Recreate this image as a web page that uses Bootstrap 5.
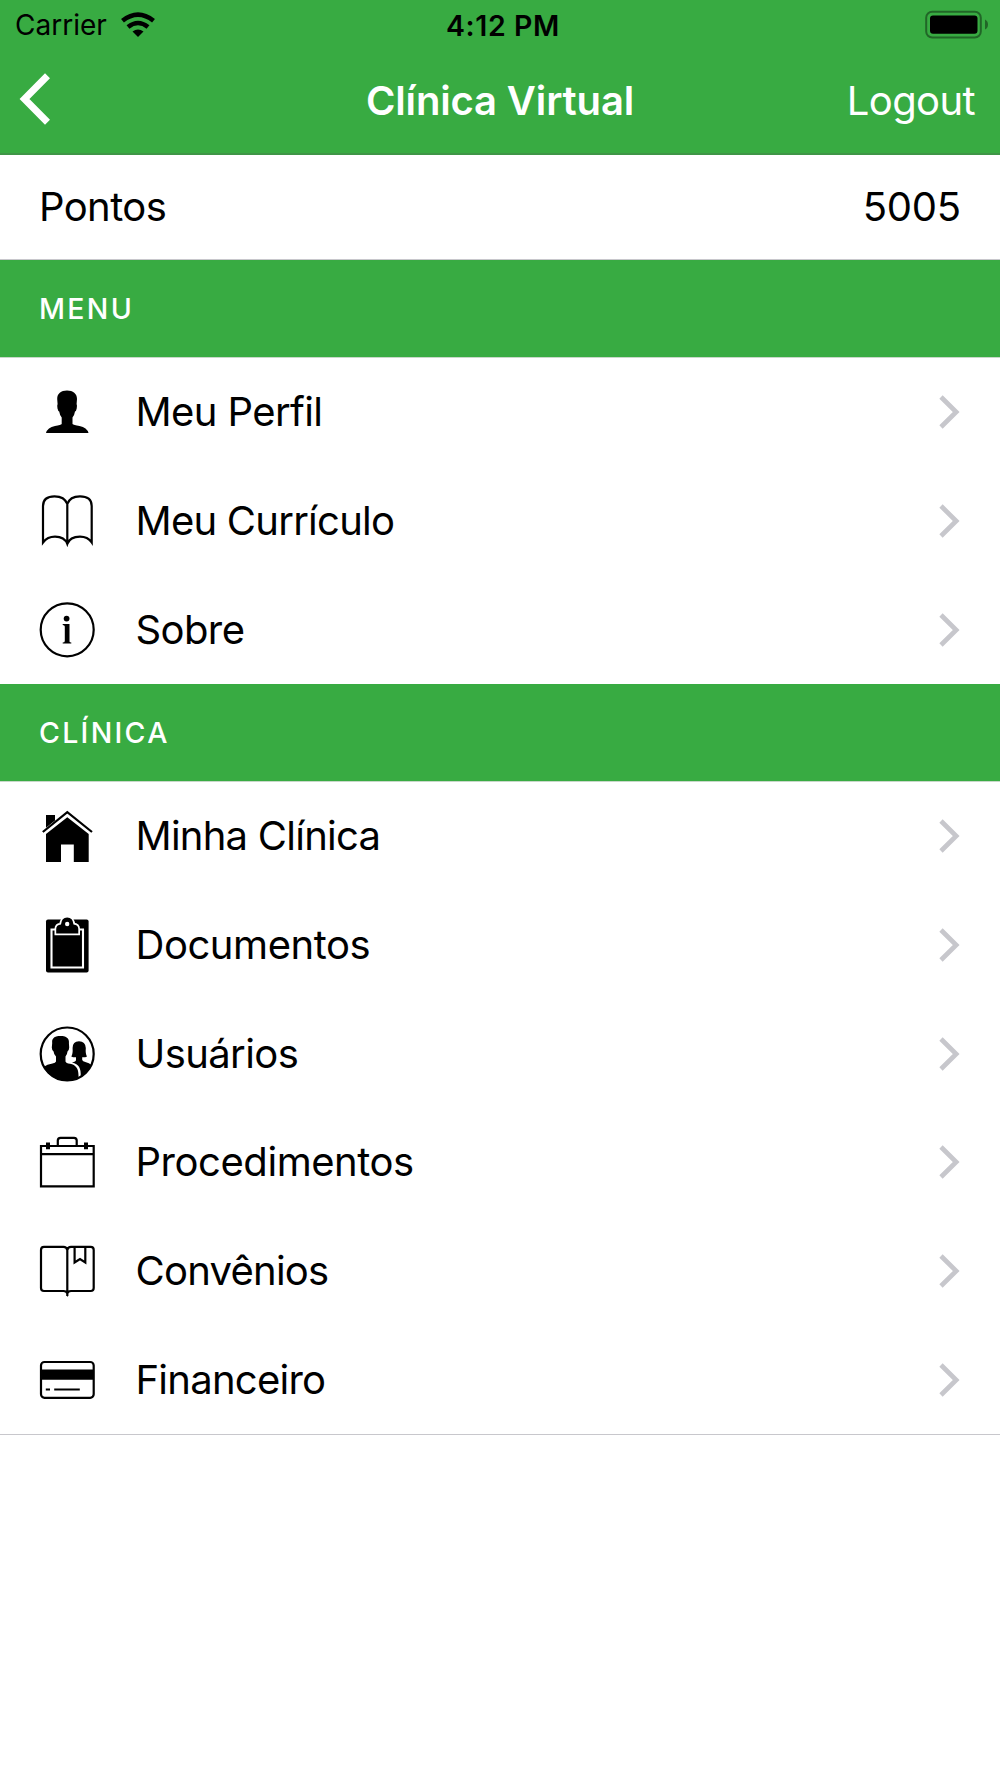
<!DOCTYPE html>
<html lang="pt-BR">
<head>
<meta charset="utf-8">
<meta name="viewport" content="width=device-width, initial-scale=1">
<title>Clínica Virtual</title>
<link href="https://cdn.jsdelivr.net/npm/bootstrap@5.3.0/dist/css/bootstrap.min.css" rel="stylesheet">
<style>
  :root { --brand: #38ab42; }
  body { font-family: Inter, "Liberation Sans", sans-serif; font-size: 40px; line-height: 1.2; color: #000; background: #fff; letter-spacing: -.6px; }
  svg { display: block; flex: none; }
  .app-head { background: var(--brand); height: 155px; border-bottom: 2px solid #3f9547; }
  .status-line { height: 50px; font-size: 28px; padding: 0 12px 0 15px; letter-spacing: 0; }
  .status-left { gap: 14px; }
  .carrier, .status-time { padding-top: 2px; }
  .status-time { font-weight: 600; font-size: 28.5px; letter-spacing: .6px; padding-left: 3px; }
  .battery { margin-bottom: 2px; }
  .title-line { height: 101px; padding: 0 25px 0 19px; }
  .back-arrow { margin-bottom: 4px; }
  .app-title { font-size: 40px; font-weight: 600; line-height: 1.2; letter-spacing: -.15px; padding-left: 6px; }
  .points-line { height: 105px; padding: 0 39px; border-bottom: 1px solid #c8c7cc; }
  .points { letter-spacing: -.2px; }
  .section-bar { background: var(--brand); height: 97px; padding: 1px 0 0 39px; font-size: 28.5px; letter-spacing: 2.3px; color: #fff; font-weight: 500; line-height: 1.2; }
  .menu-rows { border-top: 1px solid #c8d8c9; }
  .menu-rows .list-group-item { height: 108.7px; padding: 0 40px .4px 39px; gap: 40.5px; color: #000; background: #fff; }
  .menu-end { border-bottom: 1px solid #c8c7cc; }
  .snug { letter-spacing: -.75px; }
  .airy { letter-spacing: -.45px; }
  .ln { fill: none; stroke: #000; stroke-width: 2.2; }
</style>
</head>
<body>
<header class="app-head text-white">
  <div class="status-line row g-0 align-items-center text-black">
    <div class="col d-flex align-items-center status-left">
      <span class="carrier">Carrier</span>
      <svg class="wifi" width="34" height="26" viewBox="0 0 34 26"><g fill="none" stroke="#000" stroke-width="4.600"><path d="M1.500 8.800Q17-3.400 32.500 8.800"/><path d="M7 15Q17 7 27 15"/></g><path d="M11.500 19.400Q17 15.400 22.500 19.400L17 25z"/></svg>
    </div>
    <div class="col-auto status-time">4:12 PM</div>
    <div class="col d-flex justify-content-end">
      <svg class="battery" width="64" height="30" viewBox="0 0 64 30"><g opacity=".4"><rect x="2.200" y="2.700" width="54.600" height="25.800" rx="6" fill="none" stroke="#000" stroke-width="2"/><path d="M61 10.500q3 1.500 3 5t-3 5z"/></g><rect x="6" y="6.500" width="47.500" height="18.200" rx="3"/></svg>
    </div>
  </div>
  <div class="title-line row g-0 align-items-center">
    <div class="col"><svg class="back-arrow" width="32" height="54" viewBox="0 0 32 54"><path d="M28.500 3.800L5.500 27 28.500 50.200" fill="none" stroke="#fff" stroke-width="7"/></svg></div>
    <h1 class="col-auto app-title mb-0">Clínica Virtual</h1>
    <div class="col text-end"><span class="logout">Logout</span></div>
  </div>
</header>
<main>
  <div class="points-line d-flex align-items-center justify-content-between"><span>Pontos</span><span class="points">5005</span></div>

  <h2 class="section-bar d-flex align-items-center mb-0">MENU</h2>
  <div class="menu-rows list-group list-group-flush">
    <a href="#" class="list-group-item border-0 d-flex align-items-center">
      <svg width="56" height="56" viewBox="0 0 56 56"><path d="M28 6.500C22 6.500 18.200 9.500 18.200 15L18.600 20Q17.900 21 18.500 24.500 19 27 20.200 27.500 20.700 31 22.700 33.500V40Q22 41 16 42 8.500 43.500 7 49H49.500Q48 43.500 40.500 42 34.500 41 33.500 40V33.500Q35.500 31 36 27.500 37.300 27 37.700 24.500 38.300 21 37.600 20L38 15C38 9.500 34 6.500 28 6.500z"/></svg>
      <span class="flex-grow-1">Meu Perfil</span>
      <svg width="21" height="36" viewBox="0 0 21 36"><path d="M2 3L17.200 18 2 33" fill="none" stroke="#c7c7cc" stroke-width="4.700"/></svg>
    </a>
    <a href="#" class="list-group-item border-0 d-flex align-items-center">
      <svg width="56" height="56" viewBox="0 0 56 56"><path class="ln" d="M28.300 11C26.500 6 22 3.300 15.500 3.300 8 3.300 4 6.500 4 13V49.500C7 45.500 11 43.600 16 43.600 22 43.600 26.500 46 28.300 51 30 46 35 43.600 41 43.600 46 43.600 50 45.500 52.700 49.500V13C52.700 6.500 48.500 3.300 41 3.300 34.500 3.300 30 6 28.300 11V51"/></svg>
      <span class="flex-grow-1 snug">Meu Currículo</span>
      <svg width="21" height="36" viewBox="0 0 21 36"><path d="M2 3L17.200 18 2 33" fill="none" stroke="#c7c7cc" stroke-width="4.700"/></svg>
    </a>
    <a href="#" class="list-group-item border-0 d-flex align-items-center">
      <svg width="56" height="56" viewBox="0 0 56 56"><circle class="ln" cx="28.200" cy="27.800" r="26.500"/><circle cx="27.600" cy="16.600" r="2.900"/><path d="M23.700 22.100H30.500V39.600Q30.500 40.600 32.300 40.600V41.600H23.700V40.600Q25.800 40.600 25.800 39.100V24.600Q25.800 23.100 23.700 23.100z"/></svg>
      <span class="flex-grow-1">Sobre</span>
      <svg width="21" height="36" viewBox="0 0 21 36"><path d="M2 3L17.200 18 2 33" fill="none" stroke="#c7c7cc" stroke-width="4.700"/></svg>
    </a>
  </div>

  <h2 class="section-bar d-flex align-items-center mb-0">CLÍNICA</h2>
  <div class="menu-rows menu-end list-group list-group-flush">
    <a href="#" class="list-group-item border-0 d-flex align-items-center">
      <svg width="56" height="56" viewBox="0 0 56 56"><path class="ln" d="M3.800 24L28.300 4.200 53 24"/><path d="M7 7H16V12.500L7 19.800zM28.300 9.300L49.700 26V54H34.800V36.500H22V54H7V26z"/></svg>
      <span class="flex-grow-1 snug">Minha Clínica</span>
      <svg width="21" height="36" viewBox="0 0 21 36"><path d="M2 3L17.200 18 2 33" fill="none" stroke="#c7c7cc" stroke-width="4.700"/></svg>
    </a>
    <a href="#" class="list-group-item border-0 d-flex align-items-center">
      <svg width="56" height="56" viewBox="0 0 56 56"><rect x="7" y="2.500" width="42.600" height="53" rx="2"/><path d="M12.500 12.500H44V50.500H12.500z" fill="none" stroke="#fff" stroke-width="2.100"/><path d="M17.200 16.500V12Q17.200 7.800 22 7.500 22.500 1 28.200 1T34.500 7.500Q39.300 7.800 39.300 12V16.500z" stroke="#fff" stroke-width="3.400"/><path d="M17.200 16.500V12Q17.200 7.800 22 7.500 22.500.5 28.200.5T34.500 7.500Q39.300 7.800 39.300 12V16.500z"/><circle cx="28.200" cy="7" r="2.200" fill="#fff"/></svg>
      <span class="flex-grow-1 airy">Documentos</span>
      <svg width="21" height="36" viewBox="0 0 21 36"><path d="M2 3L17.200 18 2 33" fill="none" stroke="#c7c7cc" stroke-width="4.700"/></svg>
    </a>
    <a href="#" class="list-group-item border-0 d-flex align-items-center">
      <svg width="56" height="56" viewBox="0 0 56 56"><circle class="ln" cx="28.200" cy="28" r="26.500"/><path d="M4.500 41Q8 38.500 13.500 37.600 16.500 37 17 35.500V30.500Q14.800 28.500 14.600 25.500 13 25 12.800 21.500L13.200 17C12.500 12 16 10 21.500 10S30.500 12 29.900 17L30.200 21.500Q30 25 28.500 25.500 28.300 28.500 26.500 30.500V35.500Q27 37.200 31 37.800C37 39 39.500 42.500 39.500 49.500V52A26.500 26.500 0 0 1 4.500 41z"/><path d="M41.700 50.500C42.200 42.500 40 38.300 33 36.600Q37 35.500 37 34V31.300Q34.500 31.600 32.300 30.500 34 28 33.600 22 33.600 15.200 40 15.200T46.800 22Q46.300 28 48 30.500 46 31.600 43.200 31.300V34Q43.500 35.500 47 36.200 50 36.800 52.500 39A26.500 26.500 0 0 1 41.700 50.500z"/></svg>
      <span class="flex-grow-1">Usuários</span>
      <svg width="21" height="36" viewBox="0 0 21 36"><path d="M2 3L17.200 18 2 33" fill="none" stroke="#c7c7cc" stroke-width="4.700"/></svg>
    </a>
    <a href="#" class="list-group-item border-0 d-flex align-items-center">
      <svg width="56" height="56" viewBox="0 0 56 56"><path class="ln" d="M2 12H54.700V52.300H2zM2 20.200H54.700M18.800 12V6.500Q18.800 3.800 21.500 3.800H35Q37.700 3.800 37.700 6.500V12"/><path d="M7 8.600h4v6.700h-4zM45 8.600h4v6.700h-4z"/></svg>
      <span class="flex-grow-1 airy">Procedimentos</span>
      <svg width="21" height="36" viewBox="0 0 21 36"><path d="M2 3L17.200 18 2 33" fill="none" stroke="#c7c7cc" stroke-width="4.700"/></svg>
    </a>
    <a href="#" class="list-group-item border-0 d-flex align-items-center">
      <svg width="56" height="56" viewBox="0 0 56 56"><path class="ln" d="M28.300 7Q27.500 3.800 24.500 3.800H5Q2 3.800 2 7V45Q2 48 5 48H24.500Q27.500 48 28.300 50.500 29 48 32 48H51.700Q54.700 48 54.700 45V7Q54.700 3.800 51.700 3.800H32Q29 3.800 28.300 7V53M35.600 4V19.500L41 16 46.300 19.500V4"/></svg>
      <span class="flex-grow-1 snug">Convênios</span>
      <svg width="21" height="36" viewBox="0 0 21 36"><path d="M2 3L17.200 18 2 33" fill="none" stroke="#c7c7cc" stroke-width="4.700"/></svg>
    </a>
    <a href="#" class="list-group-item border-0 d-flex align-items-center">
      <svg width="56" height="56" viewBox="0 0 56 56"><rect class="ln" x="2" y="10" width="52.700" height="35.800" rx="3.500"/><path d="M2 17.500H54.700V27.700H2z"/><path class="ln" d="M6.800 37.500H11M15.200 37.500H40.800"/></svg>
      <span class="flex-grow-1 snug">Financeiro</span>
      <svg width="21" height="36" viewBox="0 0 21 36"><path d="M2 3L17.200 18 2 33" fill="none" stroke="#c7c7cc" stroke-width="4.700"/></svg>
    </a>
  </div>
</main>
<script src="https://cdn.jsdelivr.net/npm/bootstrap@5.3.0/dist/js/bootstrap.bundle.min.js"></script>
</body>
</html>
